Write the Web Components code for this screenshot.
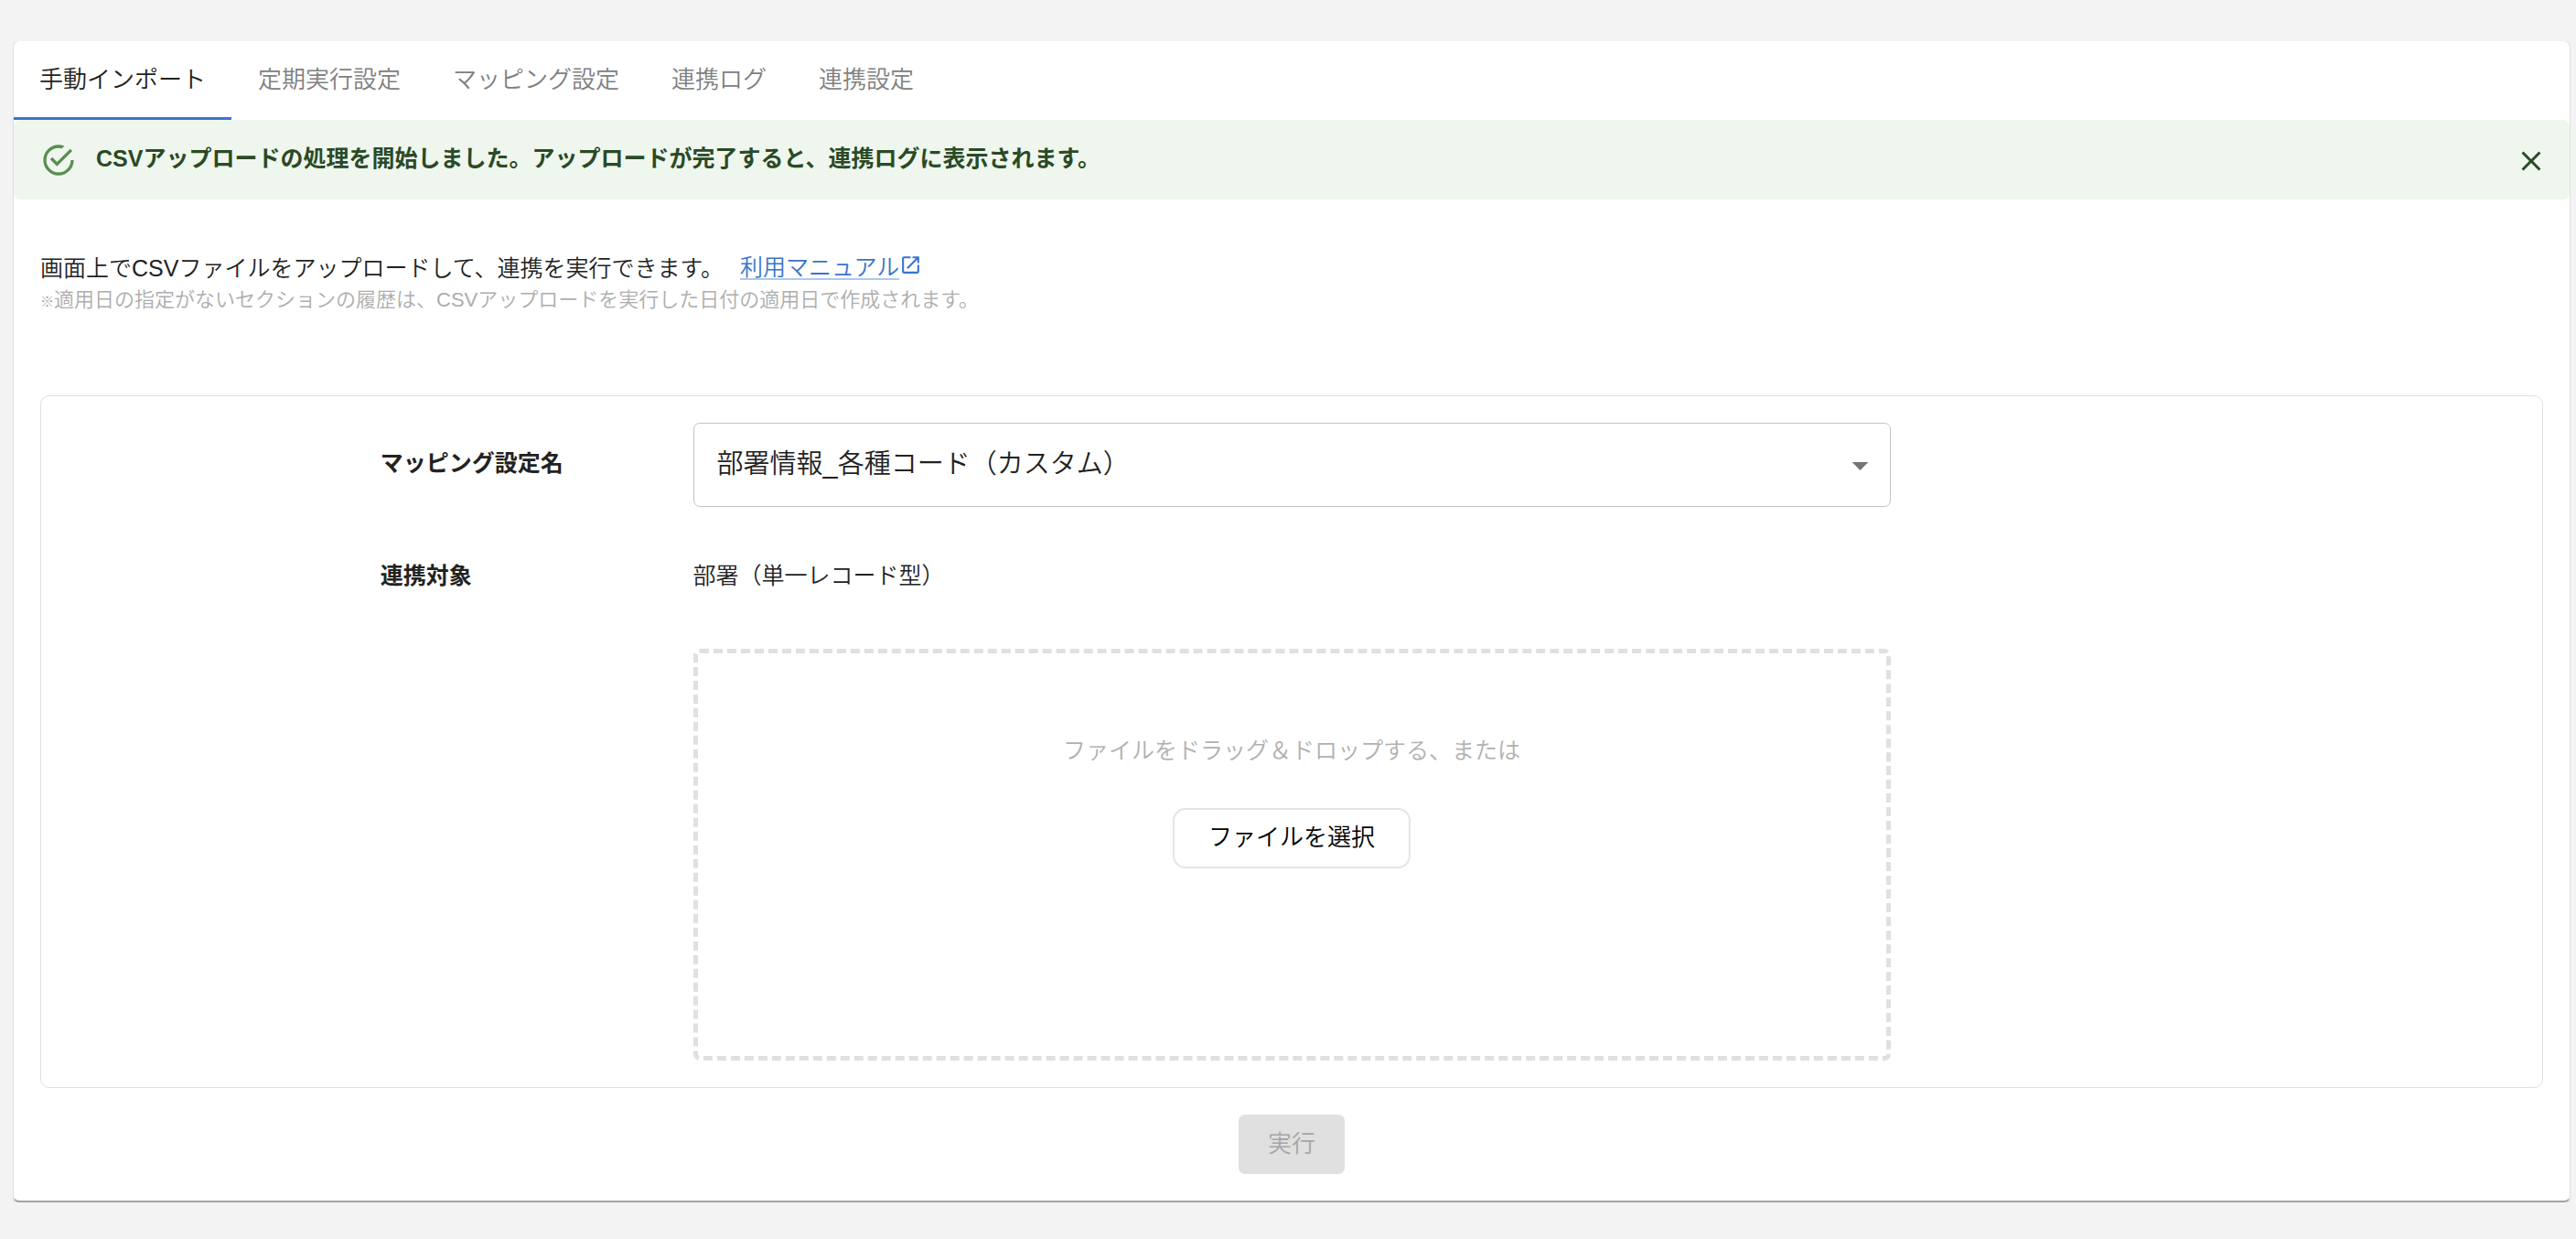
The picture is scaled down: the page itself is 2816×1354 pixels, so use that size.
<!DOCTYPE html>
<html lang="ja">
<head>
<meta charset="utf-8">
<meta name="viewport" content="width=device-width, initial-scale=1">
<title>手動インポート</title>
<style>
    body {
        background: #f3f3f3;
        color: #222;
        font-family: "Liberation Sans", "Noto Sans CJK JP", sans-serif;
        font-size: 25px;
        font-weight: 350;
        line-height: 38px;
        margin: 45px 6px 40px 14px;
    }
</style>
</head>
<body>
<import-page></import-page>

<script>
class TabBar extends HTMLElement {
    constructor () {
        super()
        this.attachShadow({mode: 'open'})
    }

    connectedCallback () {
        this.shadowRoot.innerHTML = this.render()
    }

    style () {
        return `
            <style>
                :host {
                    display: block;
                }

                div {
                    display: flex;
                    gap: 1px;
                }

                button {
                    background: none;
                    border: 0;
                    color: #808080;
                    cursor: pointer;
                    font: inherit;
                    font-size: 26px;
                    height: 86px;
                    padding: 0 28px 2px;
                }

                button[aria-selected="true"] {
                    box-shadow: inset 0 -3px #3a75d0;
                    color: #222;
                }
            </style>
        `
    }

    render () {
        const tabs = this.getAttribute('tabs').split(',')
        return `
            ${this.style()}
            <div role="tablist">
                ${tabs.map((tab, i) => `<button type="button" role="tab" aria-selected="${i === 0}">${tab}</button>`).join('')}
            </div>
        `
    }
}

class SuccessAlert extends HTMLElement {
    constructor () {
        super()
        this.attachShadow({mode: 'open'})
    }

    connectedCallback () {
        this.shadowRoot.innerHTML = this.render()
    }

    style () {
        return `
            <style>
                :host {
                    align-items: center;
                    background: #eff6ee;
                    border-radius: 7px;
                    color: #2a4a26;
                    display: flex;
                    font-weight: bold;
                    gap: 21px;
                    min-height: 87px;
                    padding: 0 24px 0 29px;
                }

                p {
                    flex: 1;
                    margin: 0;
                    padding-bottom: 4px;
                }

                svg {
                    display: block;
                    fill: currentColor;
                }

                .check {
                    fill: #588f50;
                }

                button {
                    background: none;
                    border: 0;
                    color: inherit;
                    cursor: pointer;
                    padding: 2px 0 0;
                }
            </style>
        `
    }

    render () {
        return `
            ${this.style()}
            <svg class="check" width="40" height="40" viewBox="0 0 24 24" aria-hidden="true"><path d="M20,12A8,8 0 0,1 12,20A8,8 0 0,1 4,12A8,8 0 0,1 12,4C12.76,4 13.5,4.11 14.2,4.31L15.77,2.74C14.61,2.26 13.34,2 12,2A10,10 0 0,0 2,12A10,10 0 0,0 12,22A10,10 0 0,0 22,12M7.91,10.08L6.5,11.5L11,16L21,6L19.59,4.58L11,13.17L7.91,10.08Z"/></svg>
            <p role="alert"><slot></slot></p>
            <button type="button" aria-label="閉じる">
                <svg width="36" height="36" viewBox="0 0 24 24" aria-hidden="true"><path d="M19 6.41L17.59 5 12 10.59 6.41 5 5 6.41 10.59 12 5 17.59 6.41 19 12 13.41 17.59 19 19 17.59 13.41 12z"/></svg>
            </button>
        `
    }
}

class ManualLink extends HTMLElement {
    constructor () {
        super()
        this.attachShadow({mode: 'open'})
    }

    connectedCallback () {
        this.shadowRoot.innerHTML = this.render()
    }

    style () {
        return `
            <style>
                :host {
                    display: block;
                }

                a {
                    align-items: flex-start;
                    color: #3874cb;
                    display: flex;
                    text-decoration: none;
                }

                span {
                    border-bottom: 2px solid #b0c7ea;
                    line-height: 24px;
                    padding-top: 5px;
                }

                svg {
                    display: block;
                    fill: currentColor;
                    margin-top: 2px;
                }
            </style>
        `
    }

    render () {
        return `
            ${this.style()}
            <a href="#manual">
                <span><slot></slot></span>
                <svg width="25" height="25" viewBox="0 0 24 24" aria-hidden="true"><path d="M19 19H5V5h7V3H5c-1.11 0-2 .9-2 2v14c0 1.1.89 2 2 2h14c1.1 0 2-.9 2-2v-7h-2v7zM14 3v2h3.59l-9.83 9.83 1.41 1.41L19 6.41V10h2V3h-7z"/></svg>
            </a>
        `
    }
}

class FileDrop extends HTMLElement {
    constructor () {
        super()
        this.attachShadow({mode: 'open'})
    }

    connectedCallback () {
        this.shadowRoot.innerHTML = this.render()
    }

    style () {
        return `
            <style>
                :host {
                    align-items: center;
                    border: 5px dashed #e0e0e0;
                    border-radius: 7px;
                    display: flex;
                    flex-direction: column;
                    gap: 44px;
                    padding: 87px 0 205px;
                }

                p {
                    color: #b0b0b0;
                    margin: 0;
                }

                button {
                    background: #fff;
                    border: 2px solid #e2e5ea;
                    border-radius: 14px;
                    color: #000;
                    cursor: pointer;
                    font: inherit;
                    font-size: 26px;
                    height: 66px;
                    padding: 0 37px 2px;
                }
            </style>
        `
    }

    render () {
        return `
            ${this.style()}
            <p>ファイルをドラッグ＆ドロップする、または</p>
            <button type="button">ファイルを選択</button>
        `
    }
}

class ImportForm extends HTMLElement {
    constructor () {
        super()
        this.attachShadow({mode: 'open'})
    }

    connectedCallback () {
        this.shadowRoot.innerHTML = this.render()
    }

    style () {
        return `
            <style>
                :host {
                    display: block;
                }

                form {
                    align-items: center;
                    display: flex;
                    flex-direction: column;
                    gap: 29px;
                }

                .fields {
                    align-items: center;
                    align-self: stretch;
                    border: 1px solid #e0e0e0;
                    border-radius: 10px;
                    display: grid;
                    gap: 58px;
                    grid-template-columns: repeat(8, 1fr);
                    padding: 29px;
                }

                .name {
                    font-weight: bold;
                    grid-column: 2;
                    white-space: nowrap;
                }

                .name, .value {
                    line-height: 34px;
                    padding-bottom: 5px;
                }

                .field {
                    grid-column: 3 / 7;
                }

                .select {
                    align-items: center;
                    display: grid;
                }

                .select > * {
                    grid-area: 1 / 1;
                }

                select {
                    appearance: none;
                    background: #fff;
                    border: 1px solid #c4c4c4;
                    border-radius: 7px;
                    color: inherit;
                    font: inherit;
                    font-size: 29px;
                    height: 92px;
                    padding: 0 58px 2px 25px;
                    width: 100%;
                }

                svg {
                    fill: #757575;
                    justify-self: end;
                    margin-right: 12px;
                    pointer-events: none;
                }

                .run {
                    background: #e0e0e0;
                    border: 0;
                    border-radius: 7px;
                    color: #a6a6a6;
                    font: inherit;
                    font-size: 26px;
                    height: 65px;
                    padding: 0 32px 2px;
                }
            </style>
        `
    }

    render () {
        return `
            ${this.style()}
            <form>
                <div class="fields">
                    <label class="name" for="mapping">マッピング設定名</label>
                    <div class="field select">
                        <select id="mapping">
                            <option>部署情報_各種コード（カスタム）</option>
                        </select>
                        <svg width="43" height="43" viewBox="0 0 24 24" aria-hidden="true"><path d="M7 10l5 5 5-5z"/></svg>
                    </div>
                    <div class="name">連携対象</div>
                    <div class="field value">部署（単一レコード型）</div>
                    <file-drop class="field"></file-drop>
                </div>
                <button class="run" type="submit" disabled>実行</button>
            </form>
        `
    }
}

class ImportPage extends HTMLElement {
    constructor () {
        super()
        this.attachShadow({mode: 'open'})
    }

    connectedCallback () {
        this.shadowRoot.innerHTML = this.render()
    }

    style () {
        return `
            <style>
                :host {
                    background: #fff;
                    border: solid #dedede;
                    border-bottom-color: #a3a3a3;
                    border-radius: 7px;
                    border-width: 0 1px 2px;
                    box-shadow: 0 1px 4px rgba(0,0,0, 0.12);
                    display: block;
                }

                main {
                    padding: 57px 29px 29px;
                }

                .intro {
                    display: flex;
                    gap: 18px;
                    line-height: 36px;
                }

                .note {
                    color: #adadad;
                    font-size: 22px;
                    line-height: 34px;
                    margin: 0 0 85px;
                }

                .note span {
                    font-size: 15px;
                }
            </style>
        `
    }

    render () {
        return `
            ${this.style()}
            <tab-bar tabs="手動インポート,定期実行設定,マッピング設定,連携ログ,連携設定"></tab-bar>
            <success-alert>CSVアップロードの処理を開始しました。アップロードが完了すると、連携ログに表示されます。</success-alert>
            <main>
                <div class="intro">
                    <div>画面上でCSVファイルをアップロードして、連携を実行できます。</div>
                    <manual-link>利用マニュアル</manual-link>
                </div>
                <p class="note"><span>※</span>適用日の指定がないセクションの履歴は、CSVアップロードを実行した日付の適用日で作成されます。</p>
                <import-form></import-form>
            </main>
        `
    }
}

window.customElements.define('tab-bar', TabBar)
window.customElements.define('success-alert', SuccessAlert)
window.customElements.define('manual-link', ManualLink)
window.customElements.define('file-drop', FileDrop)
window.customElements.define('import-form', ImportForm)
window.customElements.define('import-page', ImportPage)
</script>
</body>
</html>
